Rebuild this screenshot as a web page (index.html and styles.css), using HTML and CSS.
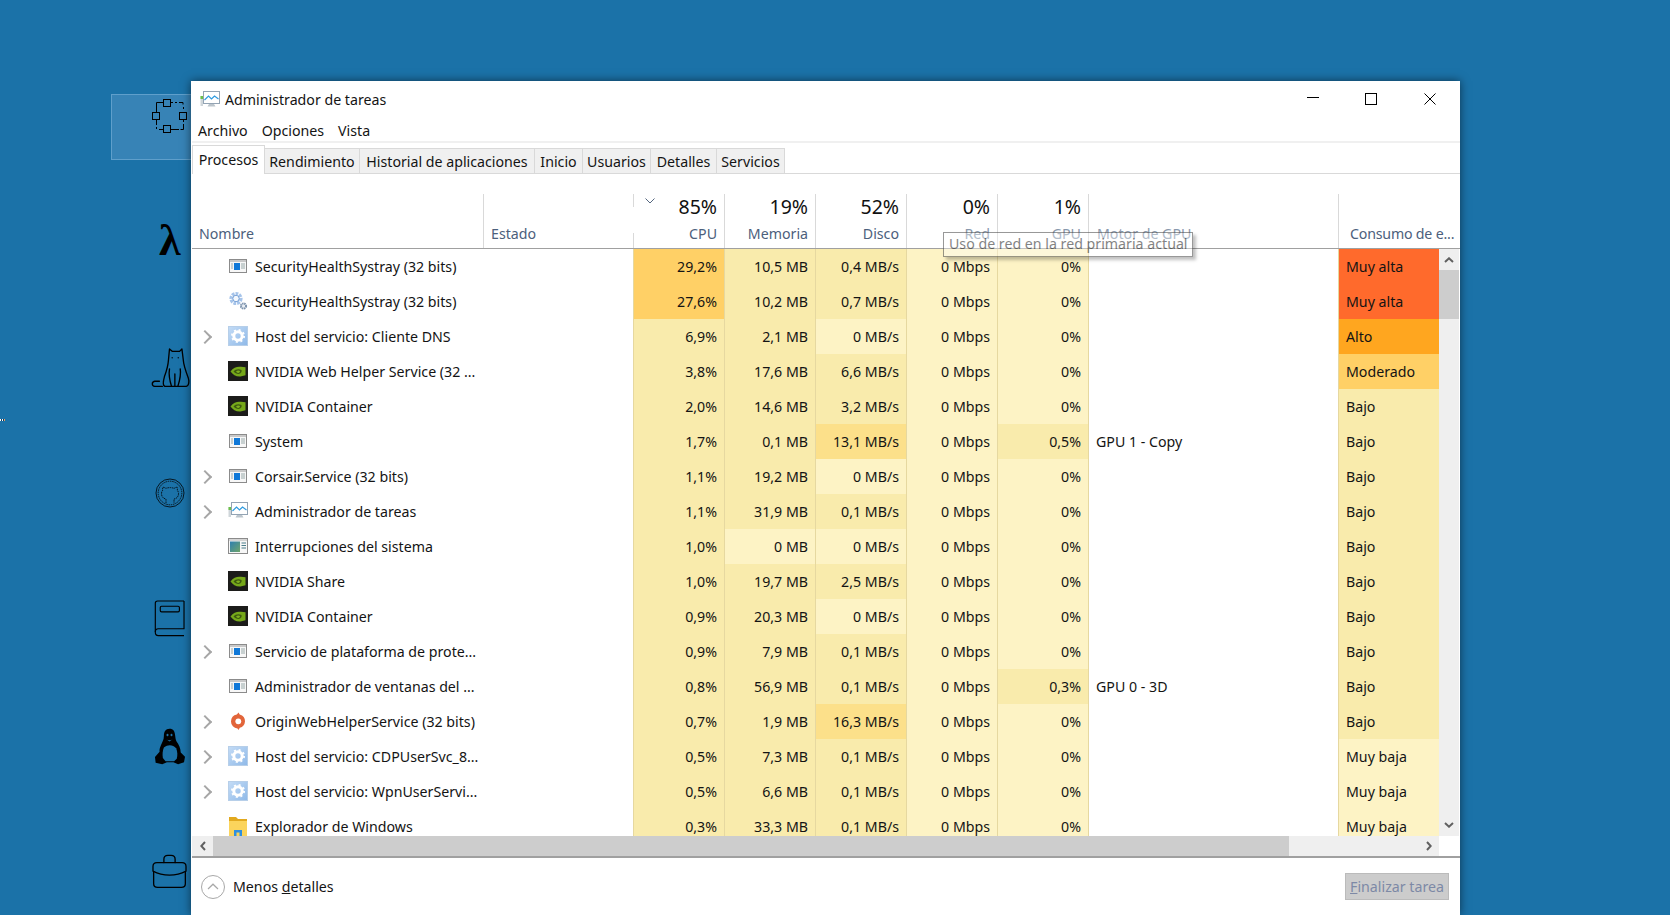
FILE: index.html
```html
<!DOCTYPE html>
<html lang="es">
<head>
<meta charset="utf-8">
<title>Administrador de tareas</title>
<link rel="stylesheet" href="styles.css">
</head>
<body>
<svg class="defs" width="0" height="0" aria-hidden="true">
  <defs>
    <linearGradient id="hostg" x1="0" y1="0" x2="1" y2="1"><stop offset="0" stop-color="#c4dcf6"/><stop offset="1" stop-color="#8fb9e8"/></linearGradient>
    <linearGradient id="intg" x1="0" y1="0" x2="1" y2="1"><stop offset="0" stop-color="#2f7fb0"/><stop offset="1" stop-color="#6fa56a"/></linearGradient>
    <symbol id="i-app" viewBox="0 0 20 20"><rect x="1.500" y="3.500" width="17" height="13" fill="#f7f7f7" stroke="#8b8b8b"/><rect x="2" y="4" width="16" height="2" fill="#c9c9c9"/><rect x="6" y="7" width="6" height="7" fill="#0f78d8"/><path d="M3 8h2M3 10h2M3 12h2M13 8h4M13 10h4M13 12h4" stroke="#9aa" stroke-width="1"/></symbol>
    <symbol id="i-gears" viewBox="0 0 20 20"><circle cx="8" cy="7.500" r="4.800" fill="#f4f8fd" stroke="#a6c4ea" stroke-width="3.600" stroke-dasharray="2.600 1"/><circle cx="8" cy="7.500" r="3.200" fill="none" stroke="#7fa6d8"/><circle cx="15.500" cy="15" r="2.600" fill="#e8edf3" stroke="#7d93ad" stroke-width="2" stroke-dasharray="1.500 .6"/></symbol>
    <symbol id="i-host" viewBox="0 0 20 20"><rect x=".5" y=".5" width="19" height="19" fill="url(#hostg)" stroke="#b7cfe9"/><circle cx="10" cy="10" r="4.200" fill="none" stroke="#fff" stroke-width="3"/><circle cx="10" cy="10" r="6" fill="none" stroke="#fff" stroke-width="2" stroke-dasharray="2 2.700"/></symbol>
    <symbol id="i-nv" viewBox="0 0 20 20"><rect width="20" height="20" fill="#1c1c1a"/><path d="M2.500 10.500C5.500 6 10 5.200 13 5.800L17.500 6.300v8l-5 1.200C8 15.800 5 13.800 2.500 10.500Z" fill="#76a81a"/><path d="M5.500 10.500c2-2.600 5.500-3 8-1.500.5 2-.5 3.600-3 4-2 0-3.700-1.100-5-2.500Z" fill="#3d5a10"/><path d="M8 10.500c1.200-1.200 3-1.300 4-.5 0 1.100-.6 1.800-1.800 1.900-1 0-1.600-.7-2.200-1.400Z" fill="#7fb01e"/></symbol>
    <symbol id="i-tm" viewBox="0 0 20 20"><rect x="3.500" y="1.500" width="16" height="12" fill="#fff" stroke="#93a4b4"/><path d="M4.500 10l4-4 3 3 3-3 4 3" fill="none" stroke="#2e9be0" stroke-width="1.200"/><path d="M9 14h5l1.500 2.500h-8Z" fill="#bcc5cc"/><rect x="0.500" y="6" width="2.500" height="10" fill="#cfd6da"/><rect x="0.500" y="6" width="2.500" height="3" fill="#6cc04a"/></symbol>
    <symbol id="i-int" viewBox="0 0 20 20"><rect x=".5" y="2.500" width="19" height="15" fill="#f7f7f7" stroke="#8b8b8b"/><rect x="1" y="3" width="18" height="2" fill="#d5d5d5"/><rect x="2" y="5.500" width="10" height="10.500" fill="url(#intg)"/><path d="M13.500 7h4.500M13.500 9.500h4.500M13.500 12h4.500" stroke="#4a7d8a"/></symbol>
    <symbol id="i-origin" viewBox="0 0 20 20"><path d="M10.500 1.500 8.800 3.600A7.200 7.200 0 0 0 3 10.400a7 7 0 0 0 6.500 7l1 1.600 1.300-2.300a7.200 7.200 0 0 0 5.200-6.300 7 7 0 0 0-5.300-6.900Z" fill="#e2653a"/><circle cx="10.300" cy="10.300" r="2.900" fill="#fff"/></symbol>
    <symbol id="i-folder" viewBox="0 0 20 20"><path d="M1 1h7l2 2h9v3H1Z" fill="#e2a91e"/><rect x="1" y="5" width="18" height="15" fill="#fbd45c"/><path d="M6 20v-6h8v6h-2.500v-3.500h-3V20Z" fill="#2f8fe0"/></symbol>
  </defs>
</svg>

<div class="sel-rect"></div>
<div class="edge-mark"><i class="dot-w"></i><i class="dot-b"></i><i class="dot-w"></i><i class="dot-b"></i><i class="dot-o"></i></div>

<svg class="di di-sel" viewBox="0 0 36 36" aria-hidden="true"><g fill="none" stroke="#000" stroke-width="1"><path d="M4.500 14V4.500h7M19 4.500h2M23 4.500h2M27 4.500h4v2M31.500 9v2M31.500 22v2M31.500 26v5.500h-3M19 31.500h8M7 31.500h4M4.500 29v2M4.500 22v5"/><rect x="11.500" y="1.500" width="7" height="7"/><rect x="0.500" y="14.500" width="7" height="7"/><rect x="27.500" y="14.500" width="7" height="7"/><rect x="11.500" y="27.500" width="7" height="7"/></g></svg>
<div class="di di-lambda">λ</div>
<svg class="di di-cat" viewBox="60 440 122 125" aria-hidden="true"><g fill="none" stroke="#000" stroke-width="4" stroke-linecap="round" stroke-linejoin="round"><path d="M118 446l8 7h22l7-7 4 32c1 18 8 36 15 54 3 10 2 24-6 25h-64c-7-3-5-15-1-29 6-16 11-34 12-50Z"/><path d="M118 505c-3 18 1 36 6 52M150 505c3 18-2 36-7 52M134 520v37"/><path d="M97 557H74c-9-1-10-13 0-15h14"/></g><circle cx="126" cy="472" r="2" fill="#000"/><circle cx="144" cy="472" r="2" fill="#000"/></svg>
<svg class="di di-git" viewBox="0 0 30 30" aria-hidden="true"><g fill="none" stroke="#000" stroke-width=".8"><circle cx="15" cy="15" r="14"/><circle cx="15" cy="15" r="11.800" stroke-dasharray="1.500 .8"/><path d="M11 25v-4c-3-.5-4.500-2.500-4.500-5.500 0-1.500.5-2.500 1.200-3.300-.2-1-.2-2 .2-3 1.200 0 2.200.6 3 1.200a11 11 0 0 1 8.200 0c.8-.6 1.800-1.200 3-1.200.4 1 .4 2 .2 3 .7.800 1.200 1.800 1.200 3.300 0 3-1.500 5-4.500 5.500v4" stroke-dasharray="1.600 .7"/></g></svg>
<svg class="di di-book" viewBox="70 58 100 118" aria-hidden="true"><g fill="none" stroke="#000" stroke-width="3.500" stroke-linejoin="round"><path d="M164 64H84c-5 0-7 3-7 7v88c0 6 4 10 9 10h78"/><path d="M164 64v84H86c-5 0-9 4-9 10"/><rect x="92" y="80" width="58" height="17" rx="4"/></g></svg>
<svg class="di di-tux" viewBox="68 440 100 116" aria-hidden="true"><path d="M118 444c-12 0-17 9-17 22 0 12-5 18-9 28-3 7-5 13-4 20l-14 16 2 17 20 5 14-6h20l14 6 18-6 3-17-13-13c0-12-6-24-13-34-3-6-3-12-4-18-1-12-5-20-17-20Z" fill="#000"/><path d="M101 501c6-5 12-7 18-7 7 0 14 3 19 9 4 9 5 20 2 32l-8 8h-26l-8-10c-2-11-1-22 3-32Z" fill="#1c72a8"/><ellipse cx="112" cy="463" rx="3" ry="4" fill="#1c72a8"/><ellipse cx="124" cy="463" rx="3" ry="4" fill="#1c72a8"/><path d="M108 475c6 5 14 5 20 0l-10 8Z" fill="#1c72a8"/></svg>
<svg class="di di-case" viewBox="64 818 112 110" aria-hidden="true"><g fill="none" stroke="#000" stroke-width="4" stroke-linejoin="round" stroke-linecap="round"><path d="M103 846v-10c0-8 6-12 12-12h10c6 0 12 4 12 12v10"/><path d="M82 846h76c7 0 12 5 12 12v14c-15 8-32 12-50 12s-35-4-50-12v-14c0-7 5-12 12-12Z"/><path d="M72 876v34c0 7 5 11 12 11h72c7 0 12-4 12-11v-34"/></g></svg>

<main class="window">
  <header class="titlebar">
    <svg class="title-icon"><use href="#i-tm"/></svg>
    <span class="title-text">Administrador de tareas</span>
    <div class="controls">
      <svg class="ctl" viewBox="0 0 12 12"><path d="M0 5.500h12" stroke="#000" fill="none"/></svg>
      <svg class="ctl" viewBox="0 0 12 12"><rect x=".5" y=".5" width="11" height="11" stroke="#000" fill="none"/></svg>
      <svg class="ctl" viewBox="0 0 12 12"><path d="M.5.500l11 11M11.500.500l-11 11" stroke="#000" fill="none"/></svg>
    </div>
  </header>
  <nav class="menu"><span>Archivo</span><span>Opciones</span><span>Vista</span></nav>
  <nav class="tabs">
    <span class="tab active t1">Procesos</span>
    <span class="tab t2">Rendimiento</span>
    <span class="tab t3">Historial de aplicaciones</span>
    <span class="tab t4">Inicio</span>
    <span class="tab t5">Usuarios</span>
    <span class="tab t6">Detalles</span>
    <span class="tab t7">Servicios</span>
  </nav>

  <div class="thead grid">
    <div class="th name-h"><span class="lbl">Nombre</span></div>
    <div class="th state-h"><span class="lbl">Estado</span></div>
    <div class="th num sorted"><svg class="sort" viewBox="0 0 10 6"><path d="M.5.500 5 5 9.500.500" fill="none" stroke="#55667f"/></svg><span class="pct">85%</span><span class="lbl">CPU</span></div>
    <div class="th num"><span class="pct">19%</span><span class="lbl">Memoria</span></div>
    <div class="th num"><span class="pct">52%</span><span class="lbl">Disco</span></div>
    <div class="th num"><span class="pct">0%</span><span class="lbl faded">Red</span></div>
    <div class="th num"><span class="pct">1%</span><span class="lbl faded">GPU</span></div>
    <div class="th motor-h"><span class="lbl faded">Motor de GPU</span></div>
    <div class="th power-h"><span class="lbl tight">Consumo de e...</span></div>
  </div>
  <div class="tooltip">Uso de red en la red primaria actual</div>

  <div class="body-wrap">
    <div class="rows">
      <div class="row grid"><div class="c name"><i class="chev none"></i><svg class="ic"><use href="#i-app"/></svg><span>SecurityHealthSystray (32 bits)</span></div><div class="c state"></div><div class="c n h3">29,2%</div><div class="c n h1">10,5 MB</div><div class="c n h1">0,4 MB/s</div><div class="c n h0">0 Mbps</div><div class="c n h0">0%</div><div class="c motor"></div><div class="c pw p4">Muy alta</div></div>
      <div class="row grid"><div class="c name"><i class="chev none"></i><svg class="ic"><use href="#i-gears"/></svg><span>SecurityHealthSystray (32 bits)</span></div><div class="c state"></div><div class="c n h3">27,6%</div><div class="c n h1">10,2 MB</div><div class="c n h1">0,7 MB/s</div><div class="c n h0">0 Mbps</div><div class="c n h0">0%</div><div class="c motor"></div><div class="c pw p4">Muy alta</div></div>
      <div class="row grid"><div class="c name"><i class="chev"></i><svg class="ic"><use href="#i-host"/></svg><span>Host del servicio: Cliente DNS</span></div><div class="c state"></div><div class="c n h1">6,9%</div><div class="c n h1">2,1 MB</div><div class="c n h0">0 MB/s</div><div class="c n h0">0 Mbps</div><div class="c n h0">0%</div><div class="c motor"></div><div class="c pw p3">Alto</div></div>
      <div class="row grid"><div class="c name"><i class="chev none"></i><svg class="ic"><use href="#i-nv"/></svg><span>NVIDIA Web Helper Service (32 ...</span></div><div class="c state"></div><div class="c n h1">3,8%</div><div class="c n h1">17,6 MB</div><div class="c n h1">6,6 MB/s</div><div class="c n h0">0 Mbps</div><div class="c n h0">0%</div><div class="c motor"></div><div class="c pw p2">Moderado</div></div>
      <div class="row grid"><div class="c name"><i class="chev none"></i><svg class="ic"><use href="#i-nv"/></svg><span>NVIDIA Container</span></div><div class="c state"></div><div class="c n h1">2,0%</div><div class="c n h1">14,6 MB</div><div class="c n h1">3,2 MB/s</div><div class="c n h0">0 Mbps</div><div class="c n h0">0%</div><div class="c motor"></div><div class="c pw p1">Bajo</div></div>
      <div class="row grid"><div class="c name"><i class="chev none"></i><svg class="ic"><use href="#i-app"/></svg><span>System</span></div><div class="c state"></div><div class="c n h1">1,7%</div><div class="c n h1">0,1 MB</div><div class="c n h2">13,1 MB/s</div><div class="c n h0">0 Mbps</div><div class="c n h1">0,5%</div><div class="c motor">GPU 1 - Copy</div><div class="c pw p1">Bajo</div></div>
      <div class="row grid"><div class="c name"><i class="chev"></i><svg class="ic"><use href="#i-app"/></svg><span>Corsair.Service (32 bits)</span></div><div class="c state"></div><div class="c n h1">1,1%</div><div class="c n h1">19,2 MB</div><div class="c n h0">0 MB/s</div><div class="c n h0">0 Mbps</div><div class="c n h0">0%</div><div class="c motor"></div><div class="c pw p1">Bajo</div></div>
      <div class="row grid"><div class="c name"><i class="chev"></i><svg class="ic"><use href="#i-tm"/></svg><span>Administrador de tareas</span></div><div class="c state"></div><div class="c n h1">1,1%</div><div class="c n h1">31,9 MB</div><div class="c n h1">0,1 MB/s</div><div class="c n h0">0 Mbps</div><div class="c n h0">0%</div><div class="c motor"></div><div class="c pw p1">Bajo</div></div>
      <div class="row grid"><div class="c name"><i class="chev none"></i><svg class="ic"><use href="#i-int"/></svg><span>Interrupciones del sistema</span></div><div class="c state"></div><div class="c n h1">1,0%</div><div class="c n h0">0 MB</div><div class="c n h0">0 MB/s</div><div class="c n h0">0 Mbps</div><div class="c n h0">0%</div><div class="c motor"></div><div class="c pw p1">Bajo</div></div>
      <div class="row grid"><div class="c name"><i class="chev none"></i><svg class="ic"><use href="#i-nv"/></svg><span>NVIDIA Share</span></div><div class="c state"></div><div class="c n h1">1,0%</div><div class="c n h1">19,7 MB</div><div class="c n h1">2,5 MB/s</div><div class="c n h0">0 Mbps</div><div class="c n h0">0%</div><div class="c motor"></div><div class="c pw p1">Bajo</div></div>
      <div class="row grid"><div class="c name"><i class="chev none"></i><svg class="ic"><use href="#i-nv"/></svg><span>NVIDIA Container</span></div><div class="c state"></div><div class="c n h1">0,9%</div><div class="c n h1">20,3 MB</div><div class="c n h0">0 MB/s</div><div class="c n h0">0 Mbps</div><div class="c n h0">0%</div><div class="c motor"></div><div class="c pw p1">Bajo</div></div>
      <div class="row grid"><div class="c name"><i class="chev"></i><svg class="ic"><use href="#i-app"/></svg><span>Servicio de plataforma de prote...</span></div><div class="c state"></div><div class="c n h1">0,9%</div><div class="c n h1">7,9 MB</div><div class="c n h1">0,1 MB/s</div><div class="c n h0">0 Mbps</div><div class="c n h0">0%</div><div class="c motor"></div><div class="c pw p1">Bajo</div></div>
      <div class="row grid"><div class="c name"><i class="chev none"></i><svg class="ic"><use href="#i-app"/></svg><span>Administrador de ventanas del ...</span></div><div class="c state"></div><div class="c n h1">0,8%</div><div class="c n h1">56,9 MB</div><div class="c n h1">0,1 MB/s</div><div class="c n h0">0 Mbps</div><div class="c n h1">0,3%</div><div class="c motor">GPU 0 - 3D</div><div class="c pw p1">Bajo</div></div>
      <div class="row grid"><div class="c name"><i class="chev"></i><svg class="ic"><use href="#i-origin"/></svg><span>OriginWebHelperService (32 bits)</span></div><div class="c state"></div><div class="c n h1">0,7%</div><div class="c n h1">1,9 MB</div><div class="c n h2">16,3 MB/s</div><div class="c n h0">0 Mbps</div><div class="c n h0">0%</div><div class="c motor"></div><div class="c pw p1">Bajo</div></div>
      <div class="row grid"><div class="c name"><i class="chev"></i><svg class="ic"><use href="#i-host"/></svg><span>Host del servicio: CDPUserSvc_8...</span></div><div class="c state"></div><div class="c n h1">0,5%</div><div class="c n h1">7,3 MB</div><div class="c n h1">0,1 MB/s</div><div class="c n h0">0 Mbps</div><div class="c n h0">0%</div><div class="c motor"></div><div class="c pw p0">Muy baja</div></div>
      <div class="row grid"><div class="c name"><i class="chev"></i><svg class="ic"><use href="#i-host"/></svg><span>Host del servicio: WpnUserServi...</span></div><div class="c state"></div><div class="c n h1">0,5%</div><div class="c n h1">6,6 MB</div><div class="c n h1">0,1 MB/s</div><div class="c n h0">0 Mbps</div><div class="c n h0">0%</div><div class="c motor"></div><div class="c pw p0">Muy baja</div></div>
      <div class="row grid"><div class="c name"><i class="chev none"></i><svg class="ic"><use href="#i-folder"/></svg><span>Explorador de Windows</span></div><div class="c state"></div><div class="c n h1">0,3%</div><div class="c n h1">33,3 MB</div><div class="c n h1">0,1 MB/s</div><div class="c n h0">0 Mbps</div><div class="c n h0">0%</div><div class="c motor"></div><div class="c pw p0">Muy baja</div></div>
    </div>
    <div class="vscroll">
      <svg class="arrow-v" viewBox="0 0 10 6"><path d="M1 5 5 1.300 9 5" fill="none" stroke="#606060" stroke-width="2"/></svg>
      <div class="vthumb"></div>
      <div class="vspace"></div>
      <svg class="arrow-v" viewBox="0 0 10 6"><path d="M1 1 5 4.700 9 1" fill="none" stroke="#606060" stroke-width="2"/></svg>
    </div>
  </div>

  <div class="hscroll">
    <div class="hbtn"><svg class="arrow-h" viewBox="0 0 6 10"><path d="M5 1 1.300 5 5 9" fill="none" stroke="#606060" stroke-width="2"/></svg></div>
    <div class="hthumb"></div>
    <div class="hspace"></div>
    <div class="hbtn"><svg class="arrow-h" viewBox="0 0 6 10"><path d="M1 1 4.700 5 1 9" fill="none" stroke="#606060" stroke-width="2"/></svg></div>
  </div>

  <footer class="footer">
    <span class="circle"><svg viewBox="0 0 12 7"><path d="M1 6 6 1.200 11 6" fill="none" stroke="#a8a8a8" stroke-width="1.200"/></svg></span>
    <span class="less">Menos <u>d</u>etalles</span>
    <span class="end-btn"><u>F</u>inalizar tarea</span>
  </footer>
</main>
</body>
</html>
```
FILE: styles.css
```css
* { box-sizing: border-box; }
html, body { margin: 0; height: 915px; overflow: hidden; }
body {
  position: relative;
  background: #1b72a8;
  font-family: "Noto Sans", "Open Sans", sans-serif;
  font-size: 14.2px;
  color: #141414;
}
.defs { position: absolute; }

/* Desktop canvas */
.sel-rect {
  position: absolute; left: 111px; top: 94px; width: 82px; height: 66px;
  background: #3783b6; border: 1px solid #5f9fcb;
}
.edge-mark { position: absolute; left: 0; top: 419px; display: flex; height: 2px; }
.edge-mark i { display: block; width: 1px; height: 2px; }
.dot-w { background: #fff; }
.dot-b { background: #0a3d66; }
.dot-o { background: #e8a060; }
.di { position: absolute; display: block; }
.di-sel { left: 152px; top: 98px; width: 36px; height: 36px; }
.di-lambda {
  left: 159px; top: 221px; font: bold 44px/40px "Liberation Serif", serif; color: #000;
}
.di-cat { left: 150px; top: 347px; width: 41px; height: 42px; }
.di-git { left: 155px; top: 478px; width: 30px; height: 30px; }
.di-book { left: 153px; top: 599px; width: 33px; height: 39px; }
.di-tux { left: 153px; top: 727px; width: 33px; height: 39px; }
.di-case { left: 151px; top: 853px; width: 37px; height: 37px; }

/* Window */
.window {
  position: absolute; left: 191px; top: 81px; width: 1269px; height: 834px;
  display: flex; flex-direction: column;
  background: #fff;
  border-left: 1px solid #fff;
  box-shadow: 0 0 9px rgba(0, 0, 0, .55);
}
.titlebar { height: 34px; display: flex; align-items: center; flex: none; padding-left: 8px; padding-top: 3px; }
.title-icon { width: 20px; height: 20px; margin-right: 5px; }
.controls { margin-left: auto; display: flex; gap: 46px; padding-right: 24px; margin-top: -1px; }
.ctl { width: 12px; height: 12px; display: block; }
.ctl:first-child { transform: translateY(-1px); }
.ctl:last-child { margin-left: 1px; }
.menu { height: 26px; display: flex; align-items: center; gap: 14px; padding: 4px 0 0 6px; flex: none; }
.tabs {
  flex: none; height: 33px; display: flex; align-items: flex-end;
  border-top: 2px solid #f0f0f0; border-bottom: 1px solid #d9d9d9;
}
.tab {
  height: 25px; display: flex; align-items: center; justify-content: center;
  background: #f0f0f0; border-top: 1px solid #d9d9d9; border-right: 1px solid #d9d9d9;
  white-space: nowrap;
}
.tab.active {
  height: 29px; margin-bottom: -1px; padding-bottom: 2px;
  background: #fff; border: 1px solid #d9d9d9; border-bottom: none;
}
.t1 { width: 73px; } .t2 { width: 95px; } .t3 { width: 175px; } .t4 { width: 48px; }
.t5 { width: 68px; } .t6 { width: 66px; } .t7 { width: 68px; }

/* Table grid */
.grid {
  display: grid;
  grid-template-columns: 292px 150px 91px 91px 91px 91px 91px 250px 100px;
}
.thead {
  flex: none; height: 75px; padding-top: 20px; border-bottom: 1px solid #a0a0a0;
  grid-template-columns: 292px 150px 91px 91px 91px 91px 91px 250px 1fr;
}
.th {
  position: relative; display: flex; flex-direction: column; justify-content: flex-end;
  border-right: 1px solid #d9d9d9; padding: 0 7px 4px 7px;
}
.th.num { align-items: flex-end; justify-content: space-between; }
.lbl { color: #4c607c; white-space: nowrap; line-height: 20px; }
.lbl.faded { color: #8898ad; }
.lbl.tight { letter-spacing: -.2px; }
.pct { font-size: 19.5px; line-height: 26px; color: #111; }
.state-h {
  border-right-color: transparent;
  background:
    linear-gradient(#d9d9d9, #d9d9d9) right top / 1px 13px no-repeat,
    linear-gradient(#d9d9d9, #d9d9d9) right bottom / 1px 15px no-repeat;
  background-origin: border-box;
}
.motor-h { padding-left: 8px; }
.power-h { border-right: none; padding: 0 0 4px 11px; overflow: hidden; }
.sort { position: absolute; left: 11px; top: 4px; width: 10px; height: 6px; }

.tooltip {
  position: absolute; left: 751px; top: 151px; width: 250px; height: 25px; padding-left: 5px;
  background: rgba(255, 255, 255, .6); border: 1px solid #555; color: #333; white-space: nowrap; line-height: 21px;
  box-shadow: 3px 3px 3px rgba(0, 0, 0, .4); opacity: .6; z-index: 3;
}

.body-wrap { flex: none; height: 587px; display: flex; overflow: hidden; }
.rows { width: 1247px; flex: none; }
.row { height: 35px; }
.c { display: flex; align-items: center; white-space: nowrap; height: 35px; }
.name { padding-left: 11px; }
.chev { width: 8px; height: 8px; flex: none; position: relative; margin: -2px 17px 0 0; }
.chev::before {
  content: ""; position: absolute; left: -3px; top: 0; width: 8px; height: 8px;
  border-top: 2px solid #a6a6a6; border-right: 2px solid #a6a6a6; transform: rotate(45deg);
}
.chev.none::before { display: none; }
.ic { width: 20px; height: 20px; flex: none; margin: -2px 7px 0 0; }
.state { border-right: 1px solid #e6d8a0; }
.n { justify-content: flex-end; padding-right: 7px; border-right: 1px solid #e6d8a0; }
.motor { padding-left: 7px; border-right: 1px solid #e6d8a0; }
.pw { padding-left: 7px; }
.h0 { background: #fdf3c5; }
.h1 { background: #f9ebac; }
.h2 { background: #fce08a; }
.h3 { background: #ffd066; }
.p0 { background: #fdf3c5; }
.p1 { background: #f9ebac; }
.p2 { background: #ffd066; }
.p3 { background: #ffa61f; }
.p4 { background: #ff6a2c; }

.vscroll { flex: none; width: 20px; background: #efefef; display: flex; flex-direction: column; align-items: center; }
.arrow-v { width: 10px; height: 6px; flex: none; margin: 8px 0; }
.vthumb { width: 20px; height: 49px; background: #cdcdcd; flex: none; margin-top: -1px; }
.vspace { flex: 1; }

.hscroll { flex: none; height: 20px; width: 1247px; display: flex; background: #efefef; }
.hbtn { width: 21px; display: flex; align-items: center; justify-content: center; flex: none; }
.arrow-h { width: 6px; height: 10px; }
.hthumb { width: 1076px; background: #cdcdcd; flex: none; }
.hspace { flex: 1; }

.footer {
  flex: 1; border-top: 2px solid #a0a0a0; display: flex; align-items: center; padding: 0 11px 0 9px;
}
.circle {
  width: 24px; height: 24px; border: 1px solid #a8a8a8; border-radius: 50%; display: flex;
  align-items: center; justify-content: center; margin-right: 8px;
}
.circle svg { width: 12px; height: 7px; }
.end-btn {
  margin-left: auto; width: 104px; height: 27px; display: flex; align-items: center; justify-content: center;
  background: #cccccc; border: 1px solid #bbbbbb; color: #7d89a6; white-space: nowrap;
}
```
